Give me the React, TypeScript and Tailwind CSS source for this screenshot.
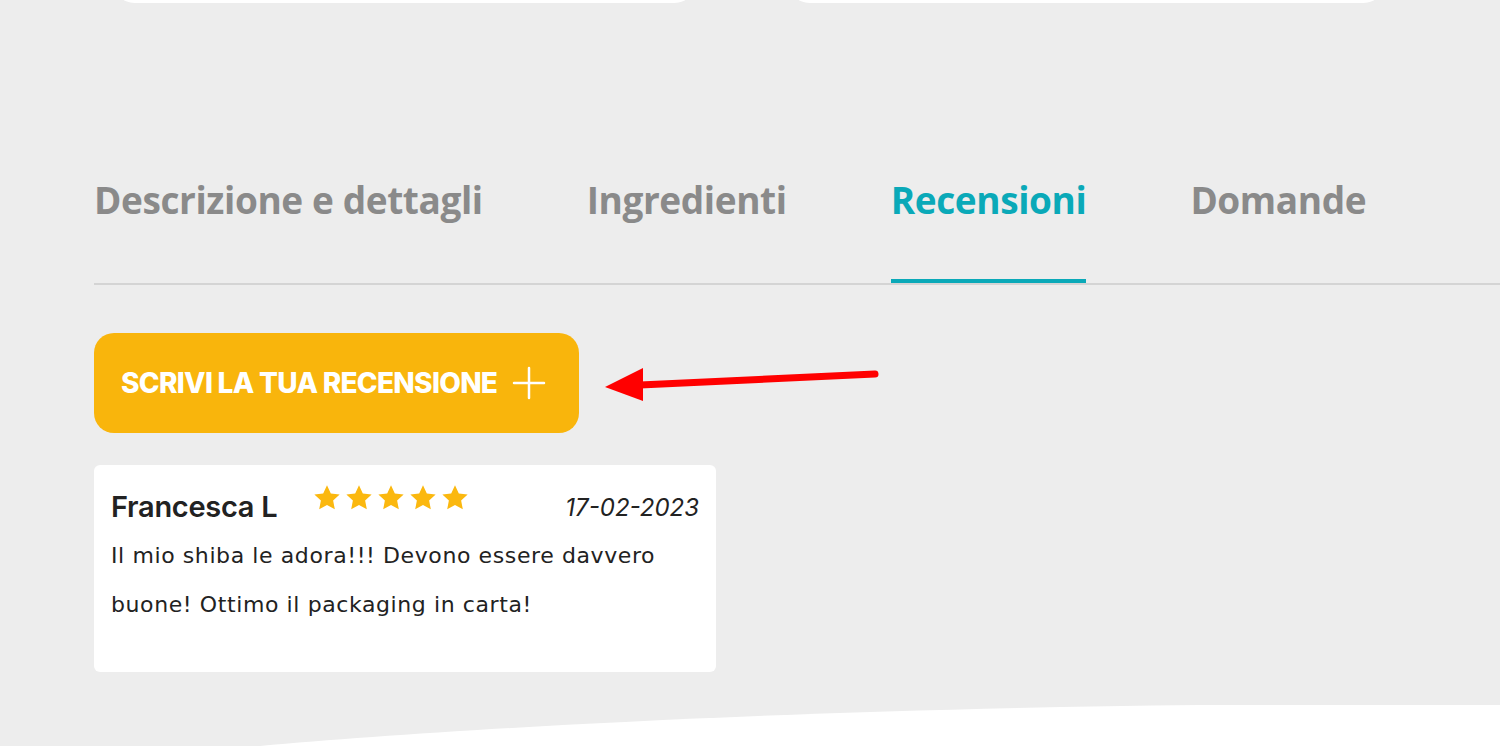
import React from 'react';

const tabs = ['Descrizione e dettagli', 'Ingredienti', 'Recensioni', 'Domande'];

const Star = () => (
  <svg viewBox="0 0 24 24" className="h-[30px] w-[30px]" fill="#fbb80f">
    <path d="M12 1.8l3.05 6.5 7.05.9-5.2 4.85 1.35 7-6.25-3.5-6.25 3.5 1.35-7L1.9 9.2l7.05-.9z" />
  </svg>
);

const App: React.FC = () => {
  const active = 'Recensioni';

  return (
    <div className="relative h-[746px] w-[1500px] overflow-hidden bg-[#ededed] font-['Inter',sans-serif]">
      {/* cards from the section above, only their bottoms show */}
      <div className="flex gap-[92px] pl-[113px]">
        <div className="mt-[-40px] h-[43px] w-[583px] rounded-[22px] bg-white" />
        <div className="mt-[-40px] h-[43px] w-[597px] rounded-[22px] bg-white" />
      </div>

      <div className="pl-[94px] pt-[175px]">
        {/* tabs */}
        <div className="flex gap-[104px] border-b-2 border-[#d4d4d4]">
          {tabs.map((t) => (
            <div
              key={t}
              className={
                t === active
                  ? "border-b-4 border-[#0aa9b8] pb-[57px] font-['Open_Sans',sans-serif] text-[37px] leading-[44px] font-bold tracking-[-0.4px] text-[#0aa9b8]"
                  : "border-b-4 border-transparent pb-[57px] font-['Open_Sans',sans-serif] text-[37px] leading-[44px] font-bold tracking-[-0.4px] text-[#8a8a8a]"
              }
            >
              {t}
            </div>
          ))}
        </div>

        {/* write review */}
        <div className="mt-[48px] flex items-center">
          <button className="flex h-[100px] w-[485px] items-center gap-[15px] rounded-[20px] bg-[#f9b50c] pl-[27px] text-white">
            <span className="font-['Inter',sans-serif] text-[28px] font-extrabold tracking-[-0.7px]">
              SCRIVI LA TUA RECENSIONE
            </span>
            <svg viewBox="0 0 34 34" className="h-[34px] w-[34px]" stroke="white" strokeWidth="2.5" strokeLinecap="round">
              <path d="M17 2v30M2 17h30" />
            </svg>
          </button>
          <svg viewBox="0 0 276 40" className="ml-[25px] h-[40px] w-[276px]">
            <path d="M36 22L271 11" stroke="#ff0000" strokeWidth="7" strokeLinecap="round" />
            <path d="M1 24L39 5V38z" fill="#ff0000" />
          </svg>
        </div>

        {/* review card */}
        <div className="mt-[32px] h-[207px] w-[622px] rounded-[6px] bg-white px-[17px] pt-[20px] text-[#222]">
          <div className="flex items-start">
            <span className="mt-[6px] text-[29px] leading-[32px] font-semibold tracking-[-0.3px]">Francesca L</span>
            <div className="ml-[35px] mt-[-2px] flex gap-[2px]">
              <Star />
              <Star />
              <Star />
              <Star />
              <Star />
            </div>
            <span className="ml-auto mt-[7px] text-[24px] leading-[32px] italic">17-02-2023</span>
          </div>
          <p className="mt-[7px] font-['DejaVu_Sans',sans-serif] text-[22px] leading-[49px] tracking-[0.6px]">
            Il mio shiba le adora!!! Devono essere davvero buone! Ottimo il packaging in carta!
          </p>
        </div>
      </div>

      {/* wave at the bottom */}
      <svg viewBox="0 0 1500 42" className="absolute bottom-0 left-0 h-[42px] w-[1500px]" preserveAspectRatio="none">
        <path d="M260 42C450 25 800 5 1200 1L1500 1V42Z" fill="white" />
      </svg>
    </div>
  );
};

export default App;
